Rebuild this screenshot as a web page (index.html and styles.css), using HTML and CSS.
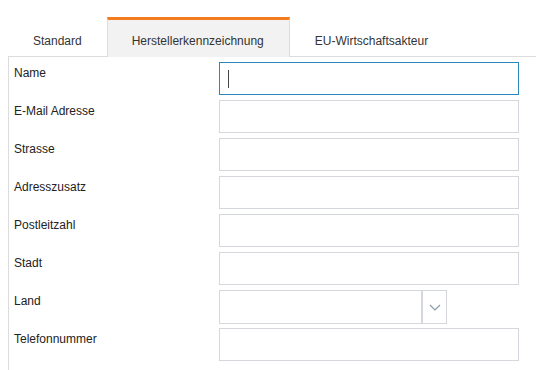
FILE: index.html
```html
<!DOCTYPE html>
<html lang="de">

<head>
    <meta charset="UTF-8">
    <meta name="viewport" content="width=device-width, initial-scale=1.0">
    <title>Herstellerkennzeichnung</title>
    <link rel="stylesheet" href="styles.css">
</head>

<body>

    <div class="tabs">
        <div class="tab">Standard</div>
        <div class="tab active">Herstellerkennzeichnung</div>
        <div class="tab">EU-Wirtschaftsakteur</div>
    </div>

    <div class="panel">
        <form class="form-grid">
            <label for="name">Name</label>
            <div class="field focused"><span class="caret"></span></div>

            <label for="email">E-Mail Adresse</label>
            <div class="field"></div>

            <label for="street">Strasse</label>
            <div class="field"></div>

            <label for="addr2">Adresszusatz</label>
            <div class="field"></div>

            <label for="zip">Postleitzahl</label>
            <div class="field"></div>

            <label for="city">Stadt</label>
            <div class="field"></div>

            <label for="country">Land</label>
            <div class="select">
                <div class="select-box"></div>
                <div class="select-arrow">
                    <svg width="12" height="7" viewBox="0 0 12 7">
                        <polyline points="1,1 6,6 11,1" fill="none" stroke="#8a9aa6" stroke-width="1.2"/>
                    </svg>
                </div>
            </div>

            <label for="phone">Telefonnummer</label>
            <div class="field"></div>
        </form>
    </div>

</body>

</html>
```

FILE: styles.css
```css
* {
    box-sizing: border-box;
    margin: 0;
    padding: 0;
}

body {
    font-family: "Liberation Sans", Arial, Helvetica, sans-serif;
    font-size: 12px;
    color: #333;
    background-color: #fff;
    padding: 17px 0 0 8px;
    overflow: hidden;
}

/* Tabs */

.tabs {
    display: flex;
    height: 39px;
    position: relative;
    z-index: 1;
}

.tab {
    padding: 14px 24px 0;
    border-top: 3px solid transparent;
    border-left: 1px solid transparent;
    border-right: 1px solid transparent;
    color: #333;
    white-space: nowrap;
}

.tab.active {
    background-color: #f2f2f2;
    border-top-color: #f47c20;
    border-left-color: #dcdcdc;
    border-right-color: #dcdcdc;
    padding-right: 25px;
    height: 40px;
}

/* Panel */

.panel {
    border-top: 1px solid #dcdcdc;
    border-left: 1px solid #dcdcdc;
    padding: 5px 0 20px 5px;
    min-height: 320px;
}

.form-grid {
    display: grid;
    grid-template-columns: 205px 300px;
    grid-auto-rows: 33px;
    row-gap: 5px;
}

.form-grid label {
    padding-top: 4px;
    color: #222;
}

.field {
    border: 1px solid #d4d7dc;
    background-color: #fff;
    position: relative;
}

.field.focused {
    border-color: #2b88bd;
}

.caret {
    position: absolute;
    left: 8px;
    top: 7px;
    width: 1px;
    height: 18px;
    background-color: #444;
}

.select {
    display: flex;
    width: 228px;
    height: 34px;
}

.select-box {
    width: 204px;
    border: 1px solid #d4d7dc;
    border-right-width: 2px;
}

.select-arrow {
    width: 24px;
    border: 1px solid #d4d7dc;
    border-left: none;
    display: flex;
    align-items: center;
    justify-content: center;
}
```
